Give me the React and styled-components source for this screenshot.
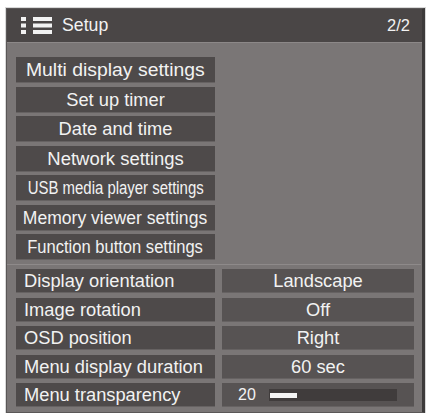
import React from "react";
import styled, { createGlobalStyle } from "styled-components";

const Global = createGlobalStyle`
  html, body { margin: 0; padding: 0; background: #ffffff; }
  body { font-family: "Liberation Sans", Arial, sans-serif; }
`;

const Page = styled.div`
  padding: 8px 0 0 6px;
`;

const Panel = styled.div`
  width: 415px;
  height: 403px;
  background: #7a7676;
  border: 1px solid #5a5757;
  border-right: 3px solid #3c3a3a;
  box-shadow: 0 0 0 1px #d8d8d8;
  display: flex;
  flex-direction: column;
`;

const Header = styled.div`
  height: 33px;
  background: #4a4646;
  border-bottom: 1px solid #8c8888;
  display: flex;
  align-items: center;
  padding: 0 12px 0 14px;
  color: #f2f2f2;
  font-size: 17.7px;
`;

const Title = styled.span`
  margin-left: 10px;
  flex: 1;
`;

const PageNum = styled.span`
  font-size: 16.5px;
`;

const Body = styled.div`
  padding: 14px 10px 0 9px;
  display: flex;
  flex-direction: column;
`;

const ButtonList = styled.div`
  display: flex;
  flex-direction: column;
  gap: 3.5px;
  width: 199px;
`;

const MenuButton = styled.div`
  height: 26px;
  background: #4e4a4a;
  color: #f2f2f2;
  font-size: 18.3px;
  display: flex;
  align-items: center;
  justify-content: center;
  white-space: nowrap;
  box-shadow: inset 0 -1px 0 #666262;
`;

const Squeezed = styled.span`
  display: inline-block;
  transform: scaleX(${(p) => p.$sx});
  transform-origin: center;
`;

const Separator = styled.div`
  height: 1px;
  background: #8e8a8a;
  margin: 4px -9px 4px -9px;
`;

const Rows = styled.div`
  display: flex;
  flex-direction: column;
  gap: 4.5px;
`;

const Row = styled.div`
  display: grid;
  grid-template-columns: 199px 192px;
  column-gap: 7px;
  height: 24px;
`;

const Label = styled.div`
  background: #4e4a4a;
  color: #f2f2f2;
  font-size: 18.3px;
  display: flex;
  align-items: center;
  padding-left: 8px;
  white-space: nowrap;
  box-shadow: inset 0 -1px 0 #666262;
`;

const Value = styled.div`
  background: #575353;
  color: #f2f2f2;
  font-size: 18.3px;
  display: flex;
  align-items: center;
  justify-content: ${(p) => (p.$left ? "flex-start" : "center")};
  padding-left: ${(p) => (p.$left ? "16px" : "0")};
  box-shadow: inset 0 -1px 0 #666262;
`;

const SliderNum = styled.span`
  font-size: 16px;
  width: 31px;
`;

const Track = styled.div`
  width: 127px;
  height: 12px;
  background: #403c3c;
  display: flex;
  align-items: center;
  padding-left: 1px;
`;

const Fill = styled.div`
  height: 5px;
  background: #f4f4f4;
`;

const MenuIcon = () => (
  <svg width="31" height="17" viewBox="0 0 31 17">
    <g fill="#f2f2f2">
      <rect x="0" y="0" width="5" height="4" />
      <rect x="0" y="6.5" width="5" height="4" />
      <rect x="0" y="13" width="5" height="4" />
      <rect x="12" y="0" width="19" height="4" />
      <rect x="12" y="6.5" width="19" height="4" />
      <rect x="12" y="13" width="19" height="4" />
    </g>
  </svg>
);

const buttons = [
  { t: "Multi display settings", sx: 1.06 },
  { t: "Set up timer", sx: 1 },
  { t: "Date and time", sx: 1 },
  { t: "Network settings", sx: 1.01 },
  { t: "USB media player settings", sx: 0.817 },
  { t: "Memory viewer settings", sx: 0.96 },
  { t: "Function button settings", sx: 0.905 },
];

const rows = [
  ["Display orientation", "Landscape"],
  ["Image rotation", "Off"],
  ["OSD position", "Right"],
  ["Menu display duration", "60 sec"],
];

export default function App() {
  const transparency = 20;
  return (
    <>
      <Global />
      <Page>
        <Panel>
          <Header>
            <MenuIcon />
            <Title>Setup</Title>
            <PageNum>2/2</PageNum>
          </Header>
          <Body>
            <ButtonList>
              {buttons.map((b) => (
                <MenuButton key={b.t}>
                  <Squeezed $sx={b.sx}>{b.t}</Squeezed>
                </MenuButton>
              ))}
            </ButtonList>
            <Separator />
            <Rows>
              {rows.map(([l, v]) => (
                <Row key={l}>
                  <Label>{l}</Label>
                  <Value>{v}</Value>
                </Row>
              ))}
              <Row>
                <Label>Menu transparency</Label>
                <Value $left>
                  <SliderNum>{transparency}</SliderNum>
                  <Track>
                    <Fill style={{ width: `${(transparency / 100) * 135}px` }} />
                  </Track>
                </Value>
              </Row>
            </Rows>
          </Body>
        </Panel>
      </Page>
    </>
  );
}
